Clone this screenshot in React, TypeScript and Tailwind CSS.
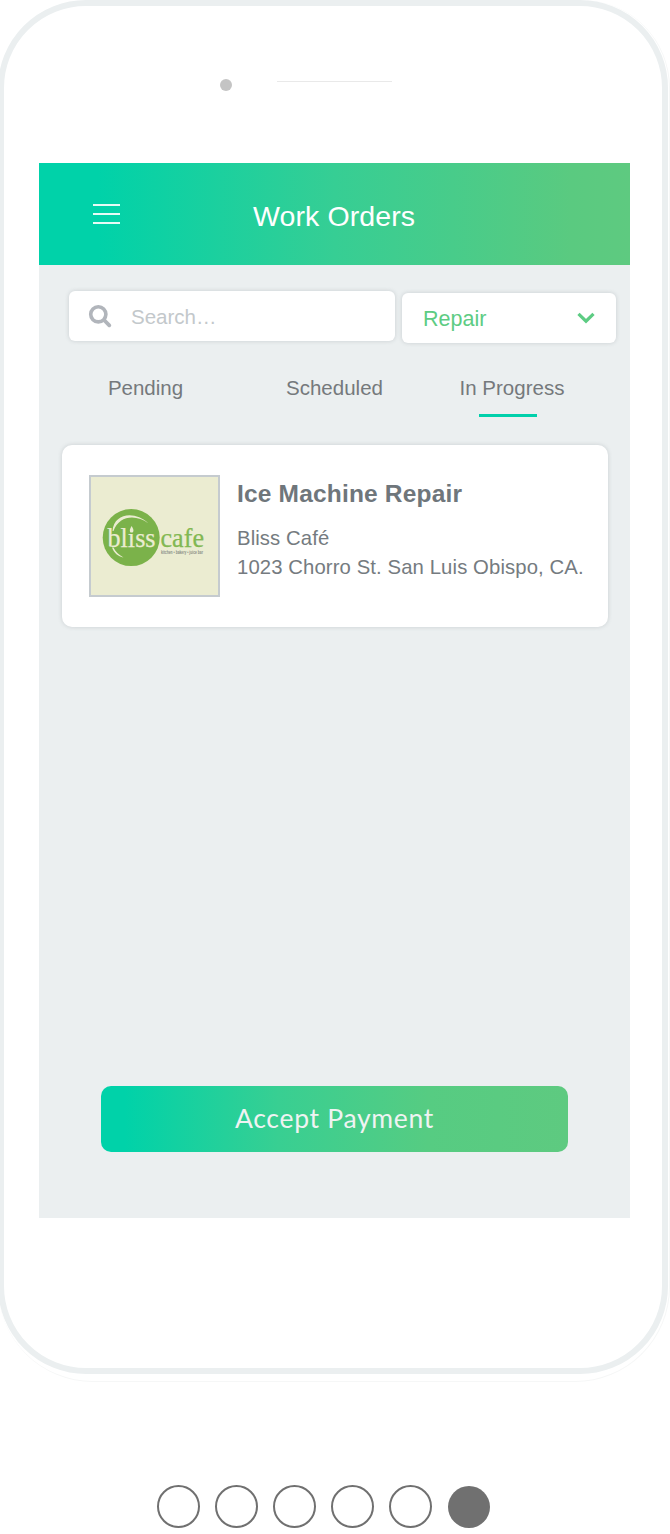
const tabs = [
  { label: "Pending", width: "w-[213px]", active: false },
  { label: "Scheduled", width: "w-[165px]", active: false },
  { label: "In Progress", width: "w-[182px]", active: true },
];

const slides = [1, 2, 3, 4, 5, 6];
const currentSlide = 6;

/** Client logo shown as the work order thumbnail. */
function BlissLogo() {
  return (
    <svg viewBox="0 0 127 118" className="h-full w-full" role="img" aria-label="Bliss Cafe">
      <circle cx="40.2" cy="60.6" r="28.5" fill="#7bb24a" />
      <path d="M21.500 54 C23 36 44 33.500 57.500 46.500 C45 37 28 38.500 22.500 54 Z" fill="#ebecd1" />
      <path d="M21 70.500 C23 76 27 79.500 32.500 80.500 C27.500 77.500 24.500 75 22.500 70.500 Z" fill="#ebecd1" />
      <path d="M40.600 49 C43.300 53 42.800 55.600 40.600 55.600 C38.400 55.600 38.100 53 40.600 49 Z" fill="#ebecd1" />
      <g className="font-['Liberation_Serif',serif]" fontSize="28" strokeWidth="0.25">
        <text
          x="16.5"
          y="69.5"
          textLength="48"
          lengthAdjust="spacingAndGlyphs"
          fill="#ebecd1"
          stroke="#ebecd1"
        >
          blıss
        </text>
        <text
          x="69.5"
          y="69.5"
          textLength="43.5"
          lengthAdjust="spacingAndGlyphs"
          fill="#82b852"
          stroke="#82b852"
        >
          cafe
        </text>
      </g>
      <text
        x="70"
        y="76.8"
        textLength="42"
        lengthAdjust="spacingAndGlyphs"
        className="font-['Liberation_Sans',sans-serif] font-bold"
        fontSize="4.5"
        fill="#8a8d86"
      >
        kitchen • bakery • juice bar
      </text>
    </svg>
  );
}

function SearchIcon() {
  return (
    <svg viewBox="0 0 24 24" className="h-6 w-6" fill="none" stroke="#b1b5bb" strokeLinecap="round">
      <circle cx="10.3" cy="10.3" r="7.6" strokeWidth="3.6" />
      <path d="M16.500 16.500 L21.300 21.300" strokeWidth="3.8" />
    </svg>
  );
}

function ChevronIcon() {
  return (
    <svg viewBox="0 0 18 12" className="h-3 w-[18px]" fill="none" stroke="#5dcc83" strokeWidth="3.2">
      <path d="M1.500 1.800 L9 9.200 L16.500 1.800" />
    </svg>
  );
}

function Header() {
  return (
    <header className="flex h-[102px] items-center bg-[linear-gradient(90deg,#00d2a9_10%,#36ce94_50%,#5aca80_90%,#5eca80)]">
      <button aria-label="Menu" className="ml-[54px] flex w-[27px] flex-col gap-[7px]">
        <span className="h-0.5 w-full bg-white/90" />
        <span className="h-0.5 w-full bg-white/90" />
        <span className="h-0.5 w-full bg-white/90" />
      </button>
      <h1 className="ml-[133px] mt-1 text-[28.5px] leading-9 tracking-[0.1px] text-white">
        Work Orders
      </h1>
    </header>
  );
}

function Filters() {
  return (
    <div className="ml-[30px] mt-[26px] flex items-start gap-[7px]">
      <div className="flex h-[50px] w-[326px] items-center rounded-md bg-white pl-[19px] shadow-[0_0_4px_rgba(80,90,100,0.22)]">
        <SearchIcon />
        <span className="ml-[19px] mt-0.5 text-[20.5px] text-[#c3c8cb]">Search…</span>
      </div>
      <div className="mt-0.5 flex h-[50px] w-[214px] items-center justify-between rounded-md bg-white pl-[21px] pr-[21px] shadow-[0_0_4px_rgba(80,90,100,0.22)]">
        <span className="mt-0.5 text-[21.5px] text-[#5dcc83]">Repair</span>
        <ChevronIcon />
      </div>
    </div>
  );
}

function Tabs() {
  return (
    <nav className="mt-[32px] flex h-[42px]">
      {tabs.map((tab) => (
        <div key={tab.label} className={`flex flex-col items-center ${tab.width}`}>
          <span
            className={`text-[20.5px] leading-[26px] text-[#75797c] ${tab.active ? "pl-2" : ""}`}
          >
            {tab.label}
          </span>
          {tab.active && <span className="mt-[13px] h-[3px] w-[58px] bg-[#00d0ab]" />}
        </div>
      ))}
    </nav>
  );
}

function WorkOrderCard() {
  return (
    <article className="ml-[23px] mt-[28px] flex h-[182px] w-[546px] rounded-[10px] bg-white pl-[27px] pt-[30px] shadow-[0_0_4px_rgba(80,90,100,0.22)]">
      <div className="h-[122px] w-[131px] shrink-0 border-2 border-[#c5cbcf] bg-[#ebecd1]">
        <BlissLogo />
      </div>
      <div className="ml-[17px] whitespace-nowrap text-[20.3px] leading-[29px] tracking-[0.11px] text-[#757b80]">
        <h2 className="mb-[15px] mt-1 text-[24.5px] font-bold leading-[30px] tracking-[0.18px] text-[#6f767b]">
          Ice Machine Repair
        </h2>
        <p>Bliss Café</p>
        <p>1023 Chorro St. San Luis Obispo, CA.</p>
      </div>
    </article>
  );
}

export default function App() {
  return (
    <div className="h-[1534px] w-[670px] overflow-hidden bg-white font-['Liberation_Sans',Arial,sans-serif]">
      <div className="-ml-0.5 h-[1382px] w-[672px] rounded-b-[95px] rounded-t-[88px] border-b border-r border-[#f6f7f7]">
        <div className="h-[1374px] w-[670px] rounded-[88px] border-[6px] border-[#ebeff0] bg-white">
          <div className="flex h-[157px] items-start">
            <span className="ml-[216px] mt-[73px] h-3 w-3 rounded-full bg-[#c4c4c4]" />
            <span className="ml-[45px] mt-[75px] h-px w-[115px] bg-[#e9e9e9]" />
          </div>
          <main className="ml-[35px] flex h-[1055px] w-[591px] flex-col bg-[#ebeff0]">
            <Header />
            <Filters />
            <Tabs />
            <WorkOrderCard />
            <button className="mb-[66px] ml-[62px] mt-auto h-[66px] w-[467px] rounded-[10px] bg-[linear-gradient(90deg,#00d2a9_5%,#38cf92_38%,#56cc82_70%,#5eca80)] font-['Lato',sans-serif] text-[26.5px] tracking-[0.7px] text-[#eff3f2]">
              Accept Payment
            </button>
          </main>
        </div>
      </div>
      <div className="ml-[157px] mt-[103px] flex gap-[15px]">
        {slides.map((slide) => (
          <span
            key={slide}
            className={
              slide === currentSlide
                ? "ml-px mt-px h-[42px] w-[42px] rounded-full bg-[#707070]"
                : "h-[43px] w-[43px] rounded-full border-2 border-[#707070] bg-white"
            }
          />
        ))}
      </div>
    </div>
  );
}
